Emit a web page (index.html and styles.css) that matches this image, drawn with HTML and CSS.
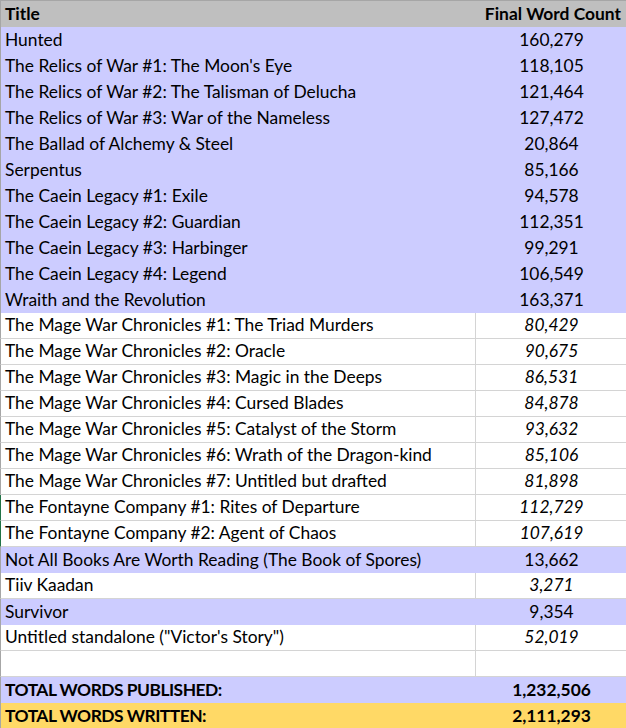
FILE: index.html
```html
<!DOCTYPE html>
<html>
<head>
<meta charset="utf-8">
<link rel="stylesheet" href="styles.css">
</head>
<body>
<div class="sheet">
  <div class="row head"><div class="c1">Title</div><div class="c2">Final Word Count</div></div>
  <div class="row pub"><div class="c1">Hunted</div><div class="c2">160,279</div></div>
  <div class="row pub"><div class="c1">The Relics of War #1: The Moon's Eye</div><div class="c2">118,105</div></div>
  <div class="row pub"><div class="c1">The Relics of War #2: The Talisman of Delucha</div><div class="c2">121,464</div></div>
  <div class="row pub"><div class="c1">The Relics of War #3: War of the Nameless</div><div class="c2">127,472</div></div>
  <div class="row pub"><div class="c1">The Ballad of Alchemy &amp; Steel</div><div class="c2">20,864</div></div>
  <div class="row pub"><div class="c1">Serpentus</div><div class="c2">85,166</div></div>
  <div class="row pub"><div class="c1">The Caein Legacy #1: Exile</div><div class="c2">94,578</div></div>
  <div class="row pub"><div class="c1">The Caein Legacy #2: Guardian</div><div class="c2">112,351</div></div>
  <div class="row pub"><div class="c1">The Caein Legacy #3: Harbinger</div><div class="c2">99,291</div></div>
  <div class="row pub"><div class="c1">The Caein Legacy #4: Legend</div><div class="c2">106,549</div></div>
  <div class="row pub"><div class="c1">Wraith and the Revolution</div><div class="c2">163,371</div></div>
  <div class="row unpub"><div class="c1">The Mage War Chronicles #1: The Triad Murders</div><div class="c2">80,429</div></div>
  <div class="row unpub"><div class="c1">The Mage War Chronicles #2: Oracle</div><div class="c2">90,675</div></div>
  <div class="row unpub"><div class="c1">The Mage War Chronicles #3: Magic in the Deeps</div><div class="c2">86,531</div></div>
  <div class="row unpub"><div class="c1">The Mage War Chronicles #4: Cursed Blades</div><div class="c2">84,878</div></div>
  <div class="row unpub"><div class="c1">The Mage War Chronicles #5: Catalyst of the Storm</div><div class="c2">93,632</div></div>
  <div class="row unpub"><div class="c1">The Mage War Chronicles #6: Wrath of the Dragon-kind</div><div class="c2">85,106</div></div>
  <div class="row unpub"><div class="c1">The Mage War Chronicles #7: Untitled but drafted</div><div class="c2">81,898</div></div>
  <div class="row unpub green"><div class="c1">The Fontayne Company #1: Rites of Departure</div><div class="c2">112,729</div></div>
  <div class="row unpub green"><div class="c1">The Fontayne Company #2: Agent of Chaos</div><div class="c2">107,619</div></div>
  <div class="row pub"><div class="c1">Not All Books Are Worth Reading (The Book of Spores)</div><div class="c2">13,662</div></div>
  <div class="row unpub"><div class="c1">Tiiv Kaadan</div><div class="c2">3,271</div></div>
  <div class="row pub"><div class="c1">Survivor</div><div class="c2">9,354</div></div>
  <div class="row unpub"><div class="c1">Untitled standalone ("Victor's Story")</div><div class="c2">52,019</div></div>
  <div class="row unpub"><div class="c1"></div><div class="c2"></div></div>
  <div class="row pub total"><div class="c1">TOTAL WORDS PUBLISHED:</div><div class="c2">1,232,506</div></div>
  <div class="row written total"><div class="c1">TOTAL WORDS WRITTEN:</div><div class="c2">2,111,293</div></div>
</div>
</body>
</html>
```

FILE: styles.css
```css
html, body {
  margin: 0;
  padding: 0;
  background: #ffffff;
}
.sheet {
  width: 626px;
  border-top: 1px solid #a6a6a6;
  font-family: Lato, "Liberation Sans", sans-serif;
  font-size: 17.4px;
  color: #000;
}
.row {
  display: grid;
  grid-template-columns: 475px 151px;
  height: 26px;
  line-height: 25px;
  box-sizing: border-box;
  border-left: 1px solid #a6a6a6;
}
.c1 {
  padding-left: 4px;
  white-space: nowrap;
  overflow: hidden;
}
.c2 {
  text-align: center;
  white-space: nowrap;
}
.head {
  background: #bfbfbf;
  font-weight: bold;
}
.head .c2 {
  text-align: right;
  padding-right: 6px;
}
.pub {
  background: #ccccff;
}
.unpub {
  background: #ffffff;
  border-bottom: 1px solid #d4d4d4;
  line-height: 24px;
}
.unpub .c1 {
  border-right: 1px solid #d4d4d4;
}
.unpub .c2 {
  font-style: italic;
}
.green {
  border-left-color: #217346;
}
.total {
  font-weight: bold;
}
.total .c1 {
  letter-spacing: -0.5px;
}
.written {
  background: #ffd966;
}
```
